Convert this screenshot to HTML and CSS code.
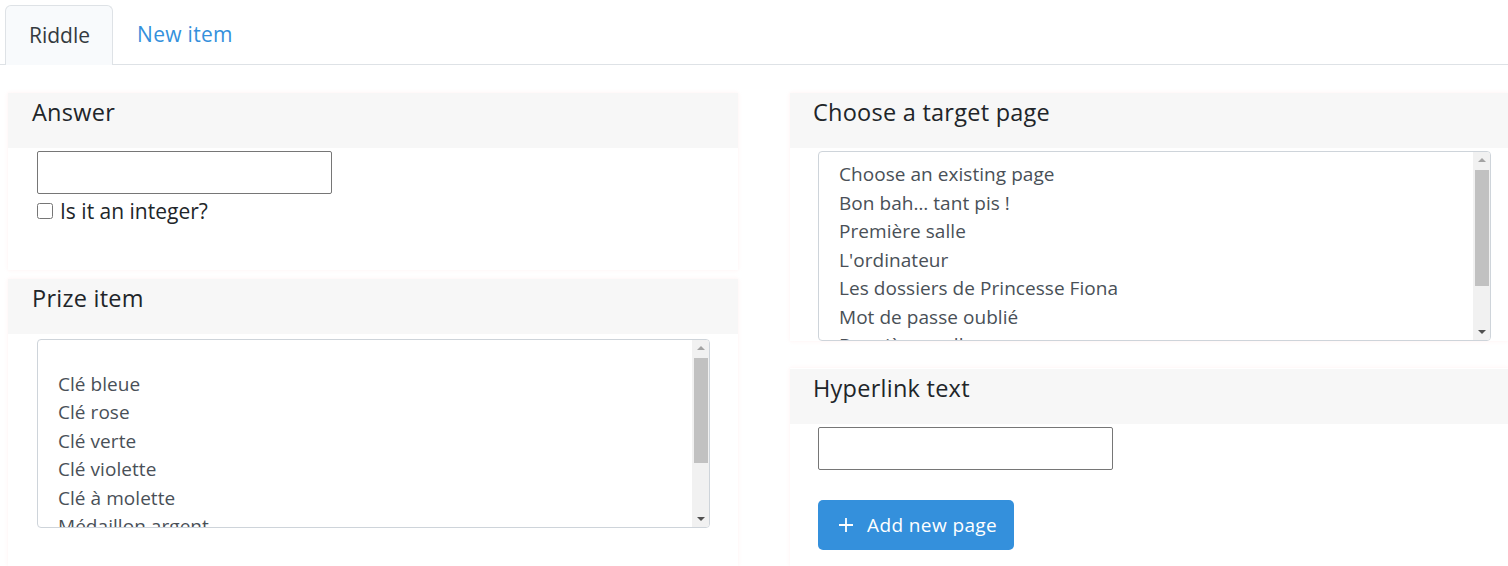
FILE: index.html
```html
<!DOCTYPE html>
<html lang="en">
<head>
<meta charset="utf-8">
<title>Riddle</title>
<link rel="stylesheet" href="styles.css">
</head>
<body>
<ul class="tabs">
  <li class="tab active">Riddle</li>
  <li class="tab link">New item</li>
</ul>
<div class="content">
  <div class="col">
    <section class="card card-answer">
      <h2 class="card-head">Answer</h2>
      <div class="card-body">
        <input class="text-input" type="text">
        <label class="check"><input type="checkbox"> <span>Is it an integer?</span></label>
      </div>
    </section>
    <section class="card card-prize">
      <h2 class="card-head">Prize item</h2>
      <div class="card-body">
        <div class="listwrap">
          <div class="listbox">
            <div class="opt empty"></div>
            <div class="opt">Clé bleue</div>
            <div class="opt">Clé rose</div>
            <div class="opt">Clé verte</div>
            <div class="opt">Clé violette</div>
            <div class="opt">Clé à molette</div>
            <div class="opt">Médaillon argent</div>
          </div>
          <div class="sbar"><span class="arr up"></span><span class="thumb thumb-prize"></span><span class="arr down"></span></div>
        </div>
      </div>
    </section>
  </div>
  <div class="col">
    <section class="card card-target">
      <h2 class="card-head">Choose a target page</h2>
      <div class="card-body">
        <div class="listwrap tall">
          <div class="listbox">
            <div class="opt">Choose an existing page</div>
            <div class="opt">Bon bah… tant pis !</div>
            <div class="opt">Première salle</div>
            <div class="opt">L'ordinateur</div>
            <div class="opt">Les dossiers de Princesse Fiona</div>
            <div class="opt">Mot de passe oublié</div>
            <div class="opt">Deuxième salle</div>
          </div>
          <div class="sbar"><span class="arr up"></span><span class="thumb thumb-target"></span><span class="arr down"></span></div>
        </div>
      </div>
    </section>
    <section class="card card-link">
      <h2 class="card-head">Hyperlink text</h2>
      <div class="card-body">
        <input class="text-input" type="text">
        <button class="btn" type="button">
          <svg class="plus" viewBox="0 0 16 16" width="16" height="16"><path d="M8 1v14M1 8h14" stroke="#fff" stroke-width="1.8" fill="none"/></svg>
          <span>Add new page</span>
        </button>
      </div>
    </section>
  </div>
</div>
</body>
</html>
```
FILE: styles.css
```css
* { box-sizing: border-box; }
html, body { margin: 0; padding: 0; background: #fff; }
body {
  font-family: "Open Sans", "Noto Sans", sans-serif;
  color: #212529;
  overflow: hidden;
  height: 566px;
}
.tabs {
  list-style: none;
  margin: 0;
  padding: 5px 0 0 5px;
  display: flex;
  border-bottom: 1px solid #dee2e6;
}
.tab {
  height: 59px;
  padding: 0 22px 2px 23px;
  font-size: 21px;
  display: flex;
  align-items: center;
  border: 1px solid transparent;
  border-bottom: none;
  border-radius: 6px 6px 0 0;
  margin-bottom: -1px;
}
.tab.active {
  background: #f8fafc;
  border-color: #dee2e6;
  color: #343a40;
  height: 60px;
}
.tab.link { color: #3490dc; letter-spacing: 0.3px; padding-left: 23px; }
.content {
  display: grid;
  grid-template-columns: 730px 718px;
  column-gap: 52px;
  padding: 28px 0 0 8px;
  height: 501px;
}
.col { display: flex; flex-direction: column; }
.card {
  background: #fff;
  box-shadow: 0 0 4px rgba(255, 225, 225, 0.45);
}
.card-head {
  margin: 0;
  height: 55px;
  background: #f7f7f7;
  font-weight: 400;
  font-size: 23.5px;
  letter-spacing: 0.25px;
  line-height: 32px;
  padding: 3px 0 0 24px;
  color: #212529;
}
.card-target .card-head, .card-link .card-head { padding-left: 23px; }
.text-input {
  display: block;
  width: 295px;
  height: 43px;
  border: 1px solid #767676;
  border-radius: 2px;
  background: #fff;
  margin: 0;
}
.card-answer { height: 177px; flex: none; }
.card-answer .card-body { padding: 3px 0 0 29px; }
.check {
  display: flex;
  align-items: center;
  margin-top: 3px;
  font-size: 21px;
  letter-spacing: 0;
  color: #212529;
}
.check input {
  width: 16px;
  height: 16px;
  margin: 0 7px 0 0;
}
.card-prize { margin-top: 9px; flex: 1; }
.card-prize .card-body { padding: 5px 0 0 29px; }
.listwrap {
  position: relative;
  width: 673px;
  height: 189px;
}
.listwrap.tall { height: 190px; }
.listbox {
  width: 100%;
  height: 100%;
  border: 1px solid #ced4da;
  border-radius: 4px;
  overflow: hidden;
  padding: 8px 0 0 20px;
  font-size: 19px;
  letter-spacing: 0.05px;
  color: #495057;
  background: #fff;
}
.opt { height: 28.5px; line-height: 28.5px; white-space: nowrap; }
.opt.empty { height: 21.5px; }
.sbar {
  position: absolute;
  top: 1px;
  right: 1px;
  bottom: 1px;
  width: 17px;
  background: #f1f1f1;
  border-radius: 0 3px 3px 0;
}
.thumb {
  position: absolute;
  left: 2px;
  right: 1px;
  background: #c1c1c1;
}
.thumb-prize { top: 18px; height: 105px; }
.thumb-target { top: 18px; height: 116px; }
.arr {
  position: absolute;
  left: 5px;
  width: 0;
  height: 0;
  border-left: 4px solid transparent;
  border-right: 4px solid transparent;
}
.arr.up { top: 6px; border-bottom: 4px solid #a3a3a3; }
.arr.down { bottom: 6px; border-top: 4px solid #505050; }
.card-target .card-body { padding: 3px 0 0 28px; }
.card-link { margin-top: 27px; flex: 1; }
.card-link .card-head { margin-top: 1px; }
.card-link .card-body { padding: 3px 0 0 28px; }
.btn {
  margin-top: 30px;
  width: 196px;
  height: 50px;
  background: #3490dc;
  border: none;
  border-radius: 5px;
  color: #fff;
  font-family: inherit;
  font-size: 19px;
  letter-spacing: 0.4px;
  display: flex;
  align-items: center;
  padding: 0 0 0 20px;
  gap: 13px;
}
.plus { flex: none; }
```
